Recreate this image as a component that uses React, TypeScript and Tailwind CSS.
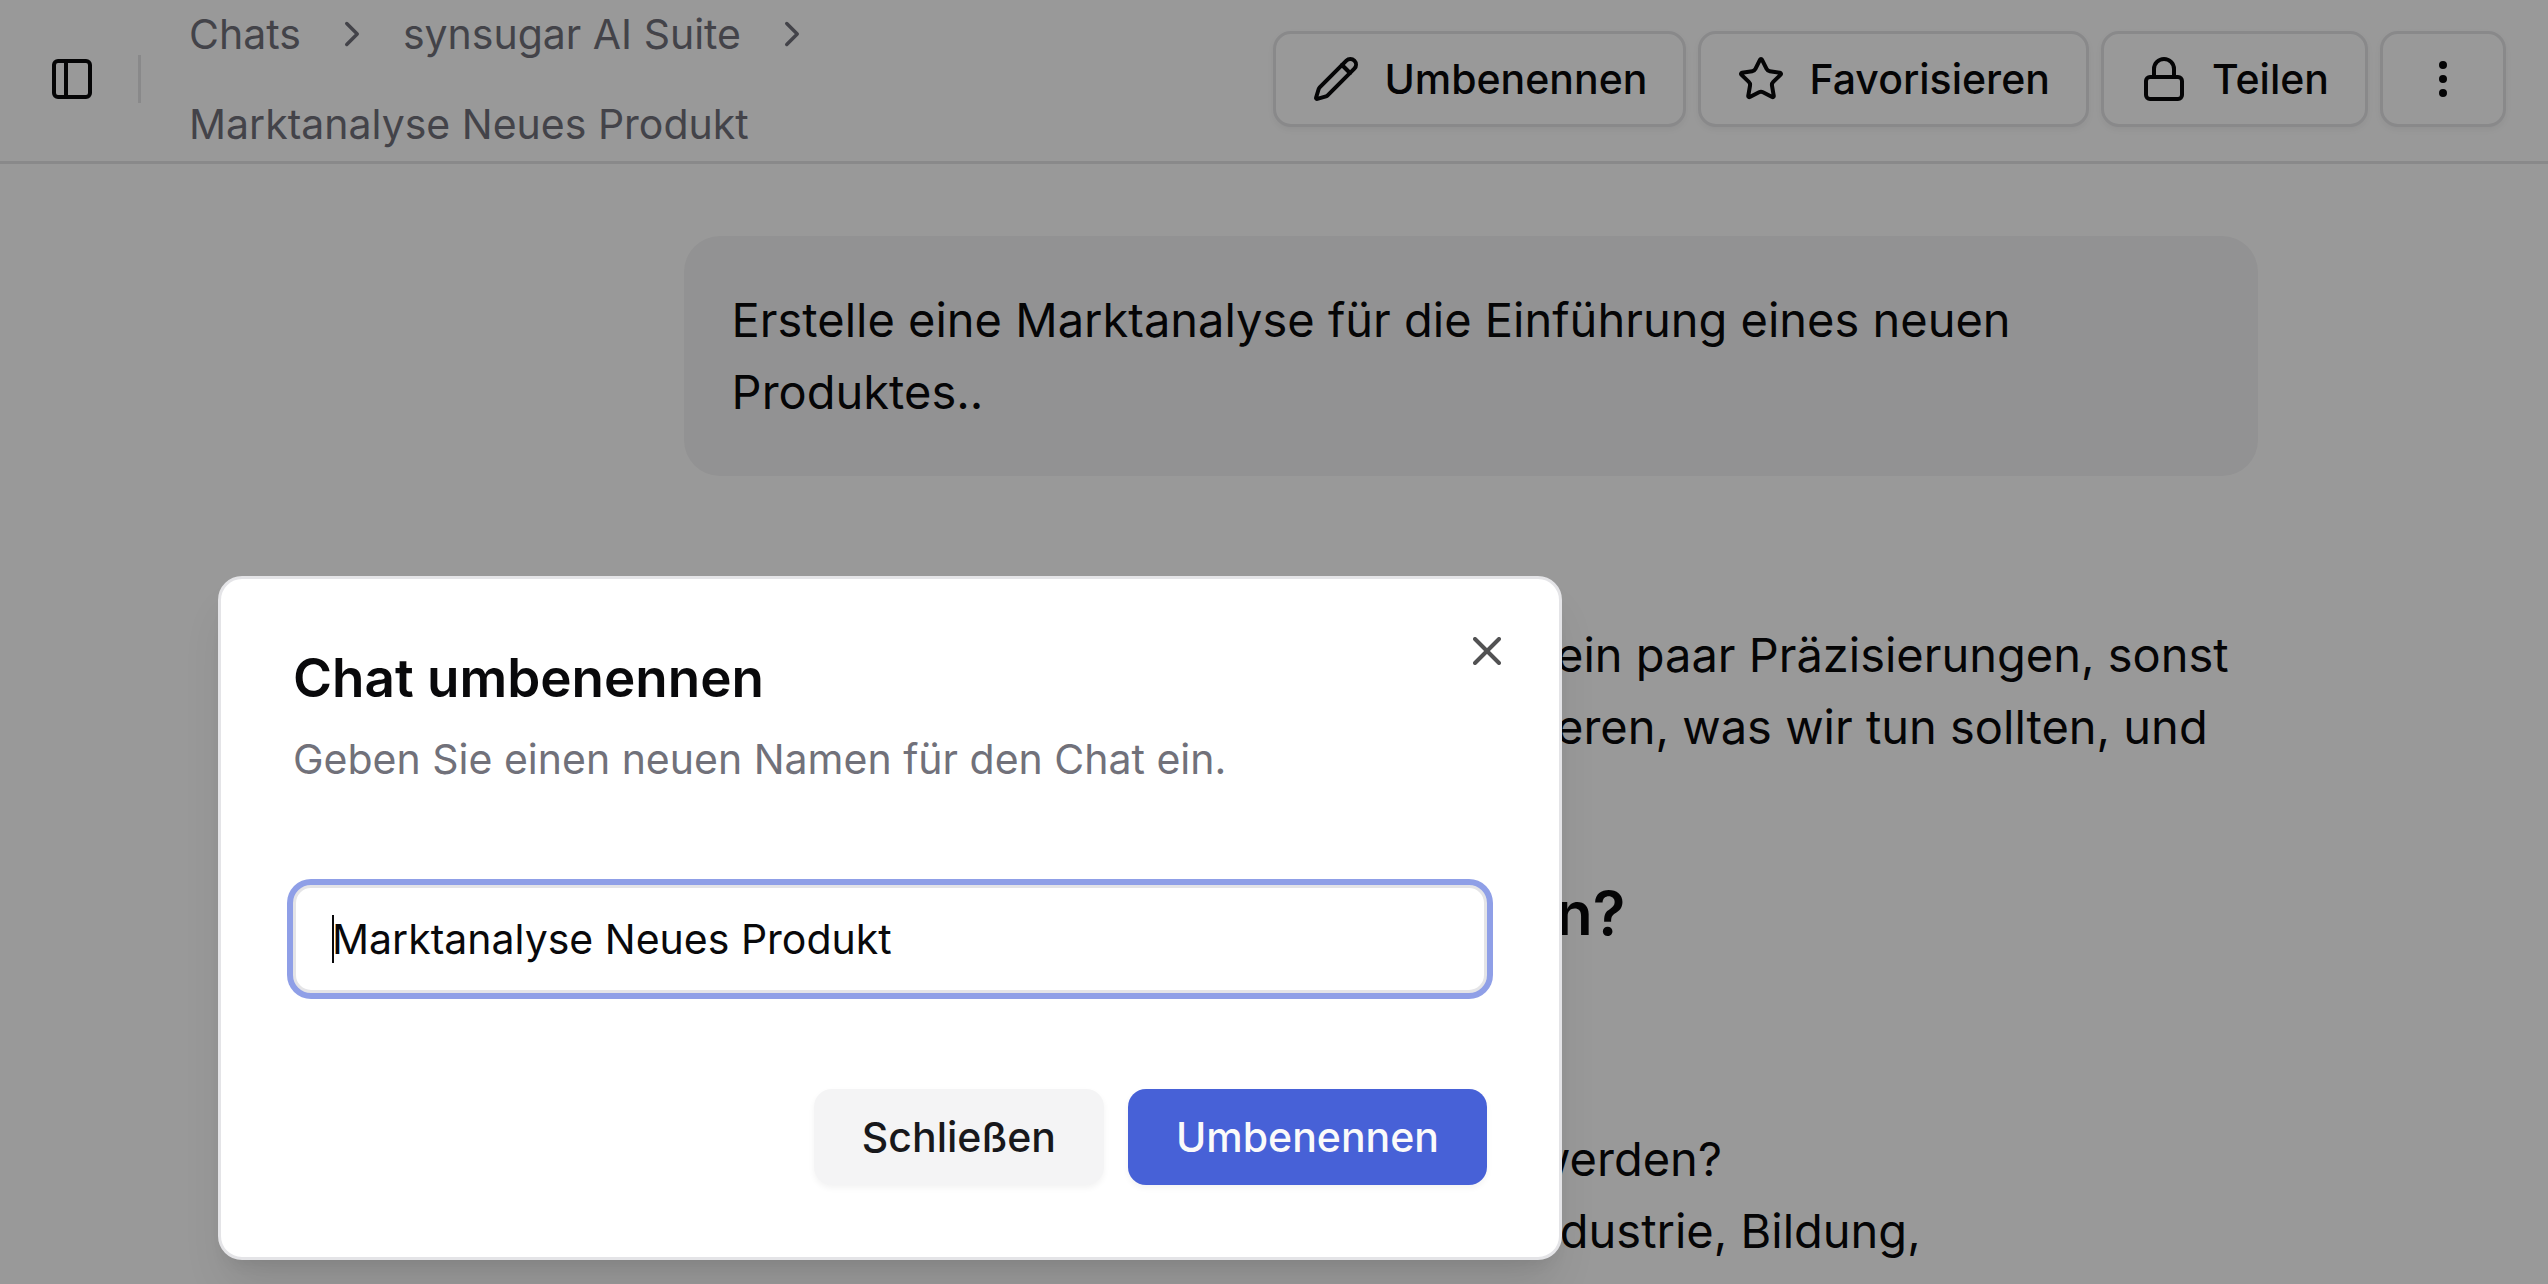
import React from 'react';
import { ChevronRight, EllipsisVertical, Lock, PanelLeft, Pencil, Star, X } from 'lucide-react';

const headerButton =
  'flex h-24 shrink-0 items-center gap-6 rounded-[18px] border-[3px] border-[#e4e4e7] bg-white px-9 text-[41px] leading-[60px] font-medium shadow-[0_3px_6px_rgba(0,0,0,0.05)]';

const Header: React.FC = () => {
  return (
    <header className="flex h-[164px] items-center border-b-[3px] border-[#e4e4e7] pr-[42px] pb-[3px] pl-12">
      <button type="button" aria-label="Seitenleiste" className="shrink-0">
        <PanelLeft className="size-12" />
      </button>
      <div className="mr-12 ml-[42px] h-12 w-[3px] shrink-0 bg-[#e4e4e7]" />

      {/* Breadcrumb */}
      <nav className="min-w-0 flex-1">
        <ol className="flex flex-wrap items-center gap-[30px] text-[41px] leading-[60px] text-[#71717a]">
          <li><a href="#chats">Chats</a></li>
          <li aria-hidden="true"><ChevronRight className="size-[42px]" /></li>
          <li><a href="#suite">synsugar AI Suite</a></li>
          <li aria-hidden="true"><ChevronRight className="size-[42px]" /></li>
          <li>Marktanalyse Neues Produkt</li>
        </ol>
      </nav>

      {/* Actions */}
      <div className="flex shrink-0 gap-3">
        <button type="button" className={headerButton}>
          <Pencil className="size-12" />
          Umbenennen
        </button>
        <button type="button" className={headerButton}>
          <Star className="size-12" />
          Favorisieren
        </button>
        <button type="button" className={headerButton}>
          <Lock className="size-12" />
          Teilen
        </button>
        <button type="button" aria-label="Mehr" className={headerButton}>
          <EllipsisVertical className="size-12" />
        </button>
      </div>
    </header>
  );
};

const Conversation: React.FC = () => {
  return (
    <main className="mx-auto max-w-[1968px] pt-[72px] text-[47px] leading-[72px]">
      {/* User message */}
      <div className="ml-auto w-4/5 rounded-[36px] bg-[#f4f4f5] p-12">
        Erstelle eine Marktanalyse für die Einführung eines neuen Produktes..
      </div>

      {/* Answer */}
      <div className="pt-[143px] pl-[1242px] whitespace-nowrap">
        <p className="pl-6">
          ein paar Präzisierungen, sonst
          <br />
          eren, was wir tun sollten, und
        </p>
        <h2 className="mt-[108px] pl-6 text-[60px] leading-[84px] font-semibold">n?</h2>
        <ul className="mt-[168px]">
          <li>werden?</li>
          <li>ndustrie, Bildung,</li>
        </ul>
      </div>
    </main>
  );
};

const RenameDialog: React.FC = () => {
  return (
    <div
      role="dialog"
      aria-labelledby="rename-title"
      className="absolute top-[576px] left-[218px] w-[1344px] rounded-3xl border-[3px] border-[#e4e4e7] bg-white p-[72px] shadow-[0_30px_45px_-9px_rgba(0,0,0,0.1),0_12px_18px_-12px_rgba(0,0,0,0.1)]"
    >
      <h2 id="rename-title" className="text-[53px] leading-[54px] font-semibold">
        Chat umbenennen
      </h2>
      <p className="mt-6 text-[41px] leading-[60px] text-[#71717a]">
        Geben Sie einen neuen Namen für den Chat ein.
      </p>

      <form className="mt-24" onSubmit={(e) => e.preventDefault()}>
        <div className="relative">
          <input
            type="text"
            aria-label="Name"
            defaultValue="Marktanalyse Neues Produkt"
            className="block h-[108px] w-full rounded-[18px] border-[3px] border-[#e4e4e7] bg-white px-9 text-[41px] caret-transparent ring-6 ring-[#8f9fe7] outline-none"
          />
          <span className="absolute top-[30px] left-[39px] h-12 w-[2px] bg-[#09090b]" />
        </div>
        <div className="mt-24 flex justify-end gap-6 text-[41px] leading-[60px] font-medium">
          <button type="button" className="h-24 rounded-[18px] bg-[#f4f4f5] px-12 text-[#18181b] shadow-[0_3px_6px_rgba(0,0,0,0.05)]">
            Schließen
          </button>
          <button type="submit" className="h-24 rounded-[18px] bg-[#4761d7] px-12 text-[#fafafa] shadow-[0_3px_6px_rgba(0,0,0,0.05)]">
            Umbenennen
          </button>
        </div>
      </form>

      <button type="button" aria-label="Dialog schließen" className="absolute top-12 right-12 opacity-70">
        <X className="size-12" />
      </button>
    </div>
  );
};

const App: React.FC = () => {
  return (
    <div className="relative h-screen overflow-hidden bg-white font-['Inter',sans-serif] text-[#09090b]">
      <Header />
      <Conversation />
      <div className="absolute inset-0 bg-black/40" />
      <RenameDialog />
    </div>
  );
};

export default App;
